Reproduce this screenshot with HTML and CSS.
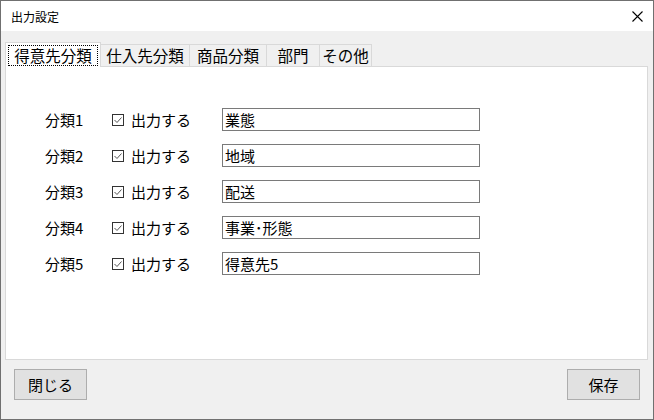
FILE: index.html
```html
<!DOCTYPE html>
<html lang="ja">
<head>
<meta charset="utf-8">
<title>出力設定</title>
<link rel="stylesheet" href="styles.css">
</head>
<body>
<div class="window">
  <div class="titlebar">
    <span class="title">出力設定</span>
    <span class="close">
      <svg width="11" height="11" viewBox="0 0 11 11"><path d="M0.5 0.5 L10.5 10.5 M10.5 0.5 L0.5 10.5" stroke="#000" stroke-width="1.1" fill="none"/></svg>
    </span>
  </div>
  <div class="body">
    <div class="tabs">
      <div class="tab tab--active"><span class="focus">得意先分類</span></div>
      <div class="tab tab--w89">仕入先分類</div>
      <div class="tab tab--w77">商品分類</div>
      <div class="tab tab--w53">部門</div>
      <div class="tab tab--w52">その他</div>
    </div>
    <div class="panel">
      <div class="rows">
        <div class="label">分類1</div>
        <label class="check"><svg class="box" width="12" height="12" viewBox="0 0 12 12"><rect x="0.5" y="0.5" width="11" height="11" fill="#fff" stroke="#333"/><path d="M2.5 6 L5 8.5 L9.5 3.5" stroke="#555" stroke-width="1" fill="none"/></svg><span>出力する</span></label>
        <input class="field" type="text" value="業態">

        <div class="label">分類2</div>
        <label class="check"><svg class="box" width="12" height="12" viewBox="0 0 12 12"><rect x="0.5" y="0.5" width="11" height="11" fill="#fff" stroke="#333"/><path d="M2.5 6 L5 8.5 L9.5 3.5" stroke="#555" stroke-width="1" fill="none"/></svg><span>出力する</span></label>
        <input class="field" type="text" value="地域">

        <div class="label">分類3</div>
        <label class="check"><svg class="box" width="12" height="12" viewBox="0 0 12 12"><rect x="0.5" y="0.5" width="11" height="11" fill="#fff" stroke="#333"/><path d="M2.5 6 L5 8.5 L9.5 3.5" stroke="#555" stroke-width="1" fill="none"/></svg><span>出力する</span></label>
        <input class="field" type="text" value="配送">

        <div class="label">分類4</div>
        <label class="check"><svg class="box" width="12" height="12" viewBox="0 0 12 12"><rect x="0.5" y="0.5" width="11" height="11" fill="#fff" stroke="#333"/><path d="M2.5 6 L5 8.5 L9.5 3.5" stroke="#555" stroke-width="1" fill="none"/></svg><span>出力する</span></label>
        <input class="field" type="text" value="事業･形態">

        <div class="label">分類5</div>
        <label class="check"><svg class="box" width="12" height="12" viewBox="0 0 12 12"><rect x="0.5" y="0.5" width="11" height="11" fill="#fff" stroke="#333"/><path d="M2.5 6 L5 8.5 L9.5 3.5" stroke="#555" stroke-width="1" fill="none"/></svg><span>出力する</span></label>
        <input class="field" type="text" value="得意先5">
      </div>
    </div>
    <div class="footer">
      <button class="btn" type="button">閉じる</button>
      <button class="btn" type="button">保存</button>
    </div>
  </div>
</div>
</body>
</html>
```
FILE: styles.css
```css
* { box-sizing: border-box; }
html, body { margin: 0; padding: 0; }
body {
  width: 654px;
  height: 420px;
  font-family: "Noto Sans CJK JP", "Noto Sans", sans-serif;
  color: #000;
  overflow: hidden;
}
.window {
  width: 654px;
  height: 420px;
  border: 1px solid #707070;
  background: #f0f0f0;
  display: flex;
  flex-direction: column;
}
.titlebar {
  height: 30px;
  background: #fff;
  display: flex;
  align-items: center;
  justify-content: space-between;
  padding: 0 10px 0 10px;
}
.title {
  font-size: 12px;
  line-height: 1;
  padding-top: 1px;
}
.close {
  display: flex;
  width: 11px;
  height: 11px;
}
.body {
  flex: 1;
  display: flex;
  flex-direction: column;
  padding: 11px 5px 0 4px;
}
.tabs {
  display: flex;
  align-items: flex-end;
  height: 25px;
  margin-bottom: -1px;
  position: relative;
  z-index: 1;
}
.tab {
  height: 23px;
  border: 1px solid #d9d9d9;
  border-left: none;
  background: #f0f0f0;
  font-size: 15.5px;
  line-height: 1;
  display: flex;
  align-items: center;
  justify-content: center;
  padding: 1px 0 0 0;
  white-space: nowrap;
}
.tab--w89 { width: 89px; }
.tab--w77 { width: 77px; }
.tab--w53 { width: 53px; }
.tab--w52 { width: 52px; }
.tab--active {
  height: 25px;
  width: 96px;
  border-left: 1px solid #d9d9d9;
  border-bottom: none;
  background: #fff;
  padding: 2px 2px 1px 2px;
}
.focus {
  display: flex;
  align-items: center;
  justify-content: center;
  width: 100%;
  height: 100%;
  border: 1px dotted #000;
}
.panel {
  height: 294px;
  background: #fff;
  border: 1px solid #d9d9d9;
  padding: 34px 0 0 39px;
}
.rows {
  display: grid;
  grid-template-columns: 67px 110px 258px;
  grid-auto-rows: 36px;
  align-items: center;
  font-size: 15px;
}
.label {
  line-height: 1;
  padding-top: 1px;
}
.check {
  display: flex;
  align-items: center;
  gap: 7px;
  line-height: 1;
}
.box {
  flex: none;
  margin-top: 2px;
}
.field {
  width: 258px;
  height: 23px;
  border: 1px solid #7a7a7a;
  background: #fff;
  font-family: inherit;
  font-size: 15px;
  color: #000;
  padding: 0 0 0 2px;
  margin: 0;
  line-height: 1;
}
.footer {
  display: flex;
  justify-content: space-between;
  padding: 9px 8px 0 9px;
}
.btn {
  width: 73px;
  height: 31px;
  background: #e1e1e1;
  border: 1px solid #adadad;
  font-family: inherit;
  font-size: 15px;
  color: #000;
  padding: 0;
  margin: 0;
  line-height: 1;
}
```
